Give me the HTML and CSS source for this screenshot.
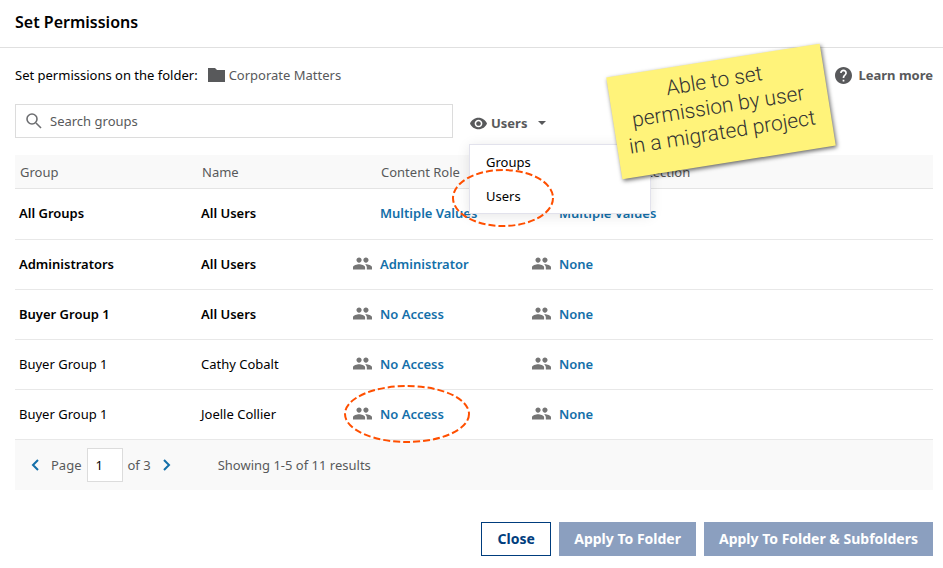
FILE: index.html
```html
<!DOCTYPE html>
<html lang="en">
<head>
    <meta charset="UTF-8">
    <meta name="viewport" content="width=device-width, initial-scale=1.0">
    <title>Set Permissions</title>
    <link rel="stylesheet" href="styles.css">
</head>
<body>
    <!-- shared icons -->
    <svg class="sprite" aria-hidden="true">
        <symbol id="people" viewBox="1 5 22 14">
            <path d="M16 11c1.66 0 2.99-1.34 2.99-3S17.66 5 16 5c-1.66 0-3 1.34-3 3s1.34 3 3 3zm-8 0c1.66 0 2.99-1.34 2.99-3S9.66 5 8 5C6.34 5 5 6.34 5 8s1.34 3 3 3zm0 2c-2.33 0-7 1.17-7 3.5V19h14v-2.500c0-2.330-4.670-3.500-7-3.500zm8 0c-.29 0-.62.02-.97.05 1.160.84 1.970 1.970 1.970 3.450V19h6v-2.500c0-2.330-4.670-3.500-7-3.500z"/>
        </symbol>
    </svg>

    <header class="dialog-header">
        <h1>Set Permissions</h1>
    </header>

    <main class="content">
        <div class="folder-bar">
            <span>Set permissions on the folder:</span>
            <span class="folder">
                <svg class="folder-icon" viewBox="0 0 17 14"><path d="M0 0h7l2 2h8v12H0z"/></svg>
                Corporate Matters
            </span>
            <a href="#" class="learn-more">
                <svg class="help-icon" viewBox="2 2 20 20"><path d="M12 2C6.480 2 2 6.480 2 12s4.480 10 10 10 10-4.480 10-10S17.520 2 12 2zm1 17h-2v-2h2v2zm2.070-7.750l-.9.920C13.450 12.900 13 13.500 13 15h-2v-.5c0-1.100.45-2.100 1.170-2.830l1.240-1.260c.37-.36.59-.86.59-1.410 0-1.100-.9-2-2-2s-2 .9-2 2H8c0-2.210 1.790-4 4-4s4 1.790 4 4c0 .88-.36 1.680-.93 2.250z"/></svg>
                Learn more
            </a>
            <p class="note">Able to set<br>permission by user<br>in a migrated project</p>
        </div>

        <div class="toolbar">
            <div class="search">
                <svg class="search-icon" viewBox="0 0 16 16"><circle cx="6" cy="6" r="5"/><path d="M10 10l5 5"/></svg>
                <input type="text" aria-label="Search groups" placeholder="Search groups">
            </div>
            <div class="view-menu">
                <button type="button" class="view-button" aria-expanded="true">
                    <svg class="eye-icon" viewBox="1 4 22 16"><path d="M12 4.500C7 4.500 2.730 7.610 1 12c1.730 4.390 6 7.500 11 7.500s9.270-3.110 11-7.500c-1.730-4.390-6-7.500-11-7.500zM12 17c-2.760 0-5-2.240-5-5s2.240-5 5-5 5 2.240 5 5-2.240 5-5 5zm0-8c-1.660 0-3 1.340-3 3s1.340 3 3 3 3-1.340 3-3-1.340-3-3-3z"/></svg>
                    Users
                    <span class="caret"></span>
                </button>
                <div class="menu">
                    <button type="button">Groups</button>
                    <button type="button">Users</button>
                </div>
                <svg class="circle circle-menu" viewBox="0 0 104 60"><ellipse cx="52" cy="30" rx="50" ry="28"/></svg>
            </div>
        </div>

        <table>
            <colgroup>
                <col class="col-group">
                <col class="col-name">
                <col class="col-role">
                <col>
            </colgroup>
            <thead>
                <tr><th>Group</th><th>Name</th><th class="role">Content Role</th><th class="role">Document Protection</th></tr>
            </thead>
            <tbody>
                <tr class="summary">
                    <td>All Groups</td>
                    <td>All Users</td>
                    <td class="role"><a href="#">Multiple Values</a></td>
                    <td class="role"><a href="#">Multiple Values</a></td>
                </tr>
                <tr class="summary">
                    <td>Administrators</td>
                    <td>All Users</td>
                    <td><svg class="people"><use href="#people"/></svg><a href="#">Administrator</a></td>
                    <td><svg class="people"><use href="#people"/></svg><a href="#">None</a></td>
                </tr>
                <tr class="summary">
                    <td>Buyer Group 1</td>
                    <td>All Users</td>
                    <td><svg class="people"><use href="#people"/></svg><a href="#">No Access</a></td>
                    <td><svg class="people"><use href="#people"/></svg><a href="#">None</a></td>
                </tr>
                <tr>
                    <td>Buyer Group 1</td>
                    <td>Cathy Cobalt</td>
                    <td><svg class="people"><use href="#people"/></svg><a href="#">No Access</a></td>
                    <td><svg class="people"><use href="#people"/></svg><a href="#">None</a></td>
                </tr>
                <tr>
                    <td>Buyer Group 1</td>
                    <td>Joelle Collier</td>
                    <td class="marked">
                        <svg class="people"><use href="#people"/></svg><a href="#">No Access</a>
                        <svg class="circle circle-cell" viewBox="0 0 128 60"><ellipse cx="64" cy="30" rx="62" ry="28"/></svg>
                    </td>
                    <td><svg class="people"><use href="#people"/></svg><a href="#">None</a></td>
                </tr>
            </tbody>
        </table>

        <div class="pager">
            <button type="button" class="page-arrow" aria-label="Previous page">
                <svg viewBox="0 0 8 12"><path d="M7 1L2 6l5 5"/></svg>
            </button>
            <label for="page">Page</label>
            <input type="text" id="page" value="1">
            <span>of 3</span>
            <button type="button" class="page-arrow next" aria-label="Next page">
                <svg viewBox="0 0 8 12"><path d="M1 1l5 5-5 5"/></svg>
            </button>
            <span class="results">Showing 1-5 of 11 results</span>
        </div>

        <div class="actions">
            <button type="button" class="btn">Close</button>
            <button type="button" class="btn apply">Apply To Folder</button>
            <button type="button" class="btn apply">Apply To Folder &amp; Subfolders</button>
        </div>
    </main>
</body>
</html>
```
FILE: styles.css
```css
* {
    box-sizing: border-box;
}
body {
    margin: 0;
    font-family: "Noto Sans", sans-serif;
    font-size: 13px;
    line-height: 20px;
    color: #000;
    background: #fff;
}
button, input {
    font: inherit;
    color: inherit;
}
button {
    cursor: pointer;
}
a {
    text-decoration: none;
}
.sprite {
    position: absolute;
    width: 0;
    height: 0;
}
.dialog-header {
    padding: 12px 15px 15px;
    border-bottom: 1px solid #e0e0e0;
}
h1 {
    margin: 0;
    font-size: 16px;
    line-height: 20px;
    font-weight: 600;
}
.content {
    padding: 17px 10px 12px 15px;
}
.folder-bar {
    position: relative;
    display: flex;
    align-items: center;
}
.folder {
    display: flex;
    align-items: center;
    gap: 4px;
    margin-left: 10px;
    color: #58595b;
}
.folder-icon {
    width: 17px;
    height: 14px;
    fill: #58595b;
}
.learn-more {
    display: flex;
    align-items: center;
    gap: 6px;
    margin-left: auto;
    font-weight: 700;
    color: #58595b;
}
.help-icon {
    width: 17px;
    height: 17px;
    fill: #58595b;
}
/* sticky note */
.note {
    position: absolute;
    z-index: 3;
    top: -5px;
    right: 104px;
    width: 216px;
    height: 103px;
    margin: 0;
    padding: 7px 4px 0 0;
    font-family: Roboto, sans-serif;
    font-size: 21px;
    line-height: 26px;
    font-weight: 300;
    text-align: center;
    color: #333;
    background: #fff37a;
    box-shadow: 1px 2px 4px rgba(0,0,0,0.6);
    transform: rotate(-9deg);
}
.toolbar {
    display: flex;
    align-items: center;
    gap: 17px;
    margin-top: 19px;
}
.search {
    display: flex;
    align-items: center;
    gap: 8px;
    width: 438px;
    height: 34px;
    padding: 0 10px;
    border: 1px solid #dcdcdc;
}
.search-icon {
    width: 16px;
    height: 16px;
    fill: none;
    stroke: #6d6e71;
    stroke-width: 1.6;
}
.search input {
    flex: 1;
    padding: 0;
    border: none;
    outline: none;
}
.search input::placeholder {
    color: #58595b;
    opacity: 1;
}
.view-menu {
    position: relative;
}
.view-button {
    display: flex;
    align-items: center;
    gap: 4px;
    padding: 4px 0 0;
    border: none;
    background: none;
    font-weight: 700;
    color: #58595b;
}
.eye-icon {
    width: 17px;
    height: 13px;
    fill: #58595b;
}
.caret {
    margin-left: 7px;
    border: 4px solid transparent;
    border-top-color: #58595b;
    border-bottom: none;
}
.menu {
    position: absolute;
    z-index: 2;
    top: 35px;
    left: -1px;
    width: 182px;
    background: #fff;
    border: 1px solid #e2e2ec;
    box-shadow: 0 2px 12px rgba(0,0,0,0.1);
}
.menu button {
    display: block;
    width: 100%;
    padding: 7px 16px;
    border: none;
    background: none;
    text-align: left;
}
/* hand-drawn highlight rings */
.circle {
    position: absolute;
    z-index: 4;
    fill: none;
    stroke: #ff4f00;
    stroke-width: 2;
    stroke-dasharray: 7 3;
    pointer-events: none;
}
.circle-menu {
    top: 59px;
    left: -19px;
    width: 104px;
    height: 60px;
}
.circle-cell {
    top: -6px;
    left: -9px;
    width: 128px;
    height: 60px;
}
table {
    width: 100%;
    margin-top: 17px;
    border-collapse: separate;
    border-spacing: 0;
    table-layout: fixed;
}
.col-group {
    width: 182px;
}
.col-name {
    width: 155px;
}
.col-role {
    width: 179px;
}
th {
    height: 34px;
    padding: 0 0 0 5px;
    border-bottom: 1px solid #e4e4e4;
    background: #f9f9f9;
    font-weight: 400;
    text-align: left;
    color: #58595b;
}
th.role {
    padding-left: 29px;
}
td {
    height: 50px;
    padding: 0 0 2px 4px;
    border-bottom: 1px solid #e8e8e8;
}
tbody tr:first-child td {
    height: 51px;
}
td:nth-child(n+3) {
    padding-left: 1px;
}
td.role:nth-child(n+3) {
    padding-left: 28px;
}
td a {
    font-weight: 600;
    color: #136fa9;
}
.summary {
    font-weight: 600;
}
.marked {
    position: relative;
}
.people {
    width: 19px;
    height: 13px;
    margin-right: 8px;
    vertical-align: -1px;
    fill: #757575;
}
.pager {
    display: flex;
    align-items: center;
    height: 50px;
    padding-left: 16px;
    background: #f9f9f9;
    color: #58595b;
}
.page-arrow {
    display: flex;
    padding: 0;
    border: none;
    background: none;
}
.page-arrow svg {
    width: 8px;
    height: 12px;
    fill: none;
    stroke: #136fa9;
    stroke-width: 2;
}
.page-arrow.next {
    margin-left: 12px;
}
.pager label {
    margin-left: 12px;
}
.pager input {
    width: 36px;
    height: 34px;
    margin: 0 5px;
    padding: 0 8px;
    border: 1px solid #dcdcdc;
    background: #fff;
    color: #000;
}
.results {
    margin-left: 47px;
}
.actions {
    display: flex;
    justify-content: flex-end;
    gap: 8px;
    margin-top: 32px;
}
.btn {
    min-width: 70px;
    height: 34px;
    padding: 0 14px;
    border: 1px solid #003d7d;
    background: #fff;
    font-size: 14px;
    font-weight: 700;
    color: #003d7d;
}
.btn.apply {
    border-color: #8b9fbf;
    background: #8b9fbf;
    color: #fff;
}
```
